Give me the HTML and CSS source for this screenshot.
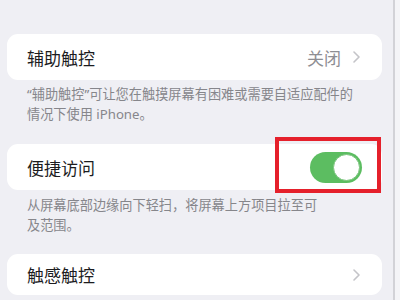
FILE: index.html
```html
<!DOCTYPE html>
<html lang="zh-CN">
<head>
<meta charset="UTF-8" />
<meta name="viewport" content="width=device-width, initial-scale=1" />
<title>辅助功能 - 触控</title>
<link rel="stylesheet" href="styles.css">
</head>
<body>
  <div class="page">
    <div class="card">
      <span class="label">辅助触控</span>
      <span class="value">关闭</span>
      <svg class="chevron" width="7" height="12" viewBox="0 0 7 12"><polyline points="1,1 6,6 1,11" /></svg>
    </div>
    <p class="note note-first">“辅助触控”可让您在触摸屏幕有困难或需要自适应配件的<br>情况下使用 iPhone。</p>

    <div class="card card-toggle">
      <span class="label">便捷访问</span>
      <div class="switch on" role="switch" aria-checked="true"><span class="knob"></span></div>
      <div class="highlight"></div>
    </div>
    <p class="note">从屏幕底部边缘向下轻扫，将屏幕上方项目拉至可<br>及范围。</p>

    <div class="card card-last">
      <span class="label">触感触控</span>
      <svg class="chevron" width="7" height="12" viewBox="0 0 7 12"><polyline points="1,1 6,6 1,11" /></svg>
    </div>
  </div>
</body>
</html>
```

FILE: styles.css
```css
* {
  box-sizing: border-box;
}
html, body {
  margin: 0;
  padding: 0;
  height: 100%;
  background: #f4f4f7;
  font-family: "Noto Sans", "Noto Sans CJK SC", sans-serif;
}
.page {
  width: 395px;
  height: 100%;
  background: #efeff4;
  border-right: 2px solid #d2d2d7;
  padding: 34px 0 0 7px;
  overflow: hidden;
}
.card {
  position: relative;
  width: 375px;
  height: 46px;
  background: #fff;
  border-radius: 11px;
  display: flex;
  align-items: center;
  padding: 0 22px 0 20px;
}
.label {
  flex: 1;
  font-size: 17px;
  color: #1c1c1e;
}
.value {
  font-size: 17px;
  color: #8e8e93;
  margin-right: 12px;
}
.chevron polyline {
  fill: none;
  stroke: #c4c4c8;
  stroke-width: 1.6;
  stroke-linecap: round;
  stroke-linejoin: round;
}
.note {
  margin: 0;
  padding: 5px 20px 20px 20px;
  font-size: 13.2px;
  line-height: 20px;
  color: #86868b;
}
.note-first {
  padding-top: 4px;
}
.card-toggle {
  padding-right: 20px;
}
.switch {
  width: 52px;
  height: 31px;
  border-radius: 16px;
  background: #5cbd61;
  display: flex;
  align-items: center;
  justify-content: flex-end;
  padding: 2px;
}
.knob {
  width: 27px;
  height: 27px;
  border-radius: 50%;
  background: #fff;
  border: 1.5px solid #7ac47d;
}
.highlight {
  position: absolute;
  left: 268px;
  top: -7px;
  width: 106px;
  height: 56px;
  border: 4px solid #e5202b;
}
.card-last {
  height: 41px;
  margin-top: -1px;
}
```
